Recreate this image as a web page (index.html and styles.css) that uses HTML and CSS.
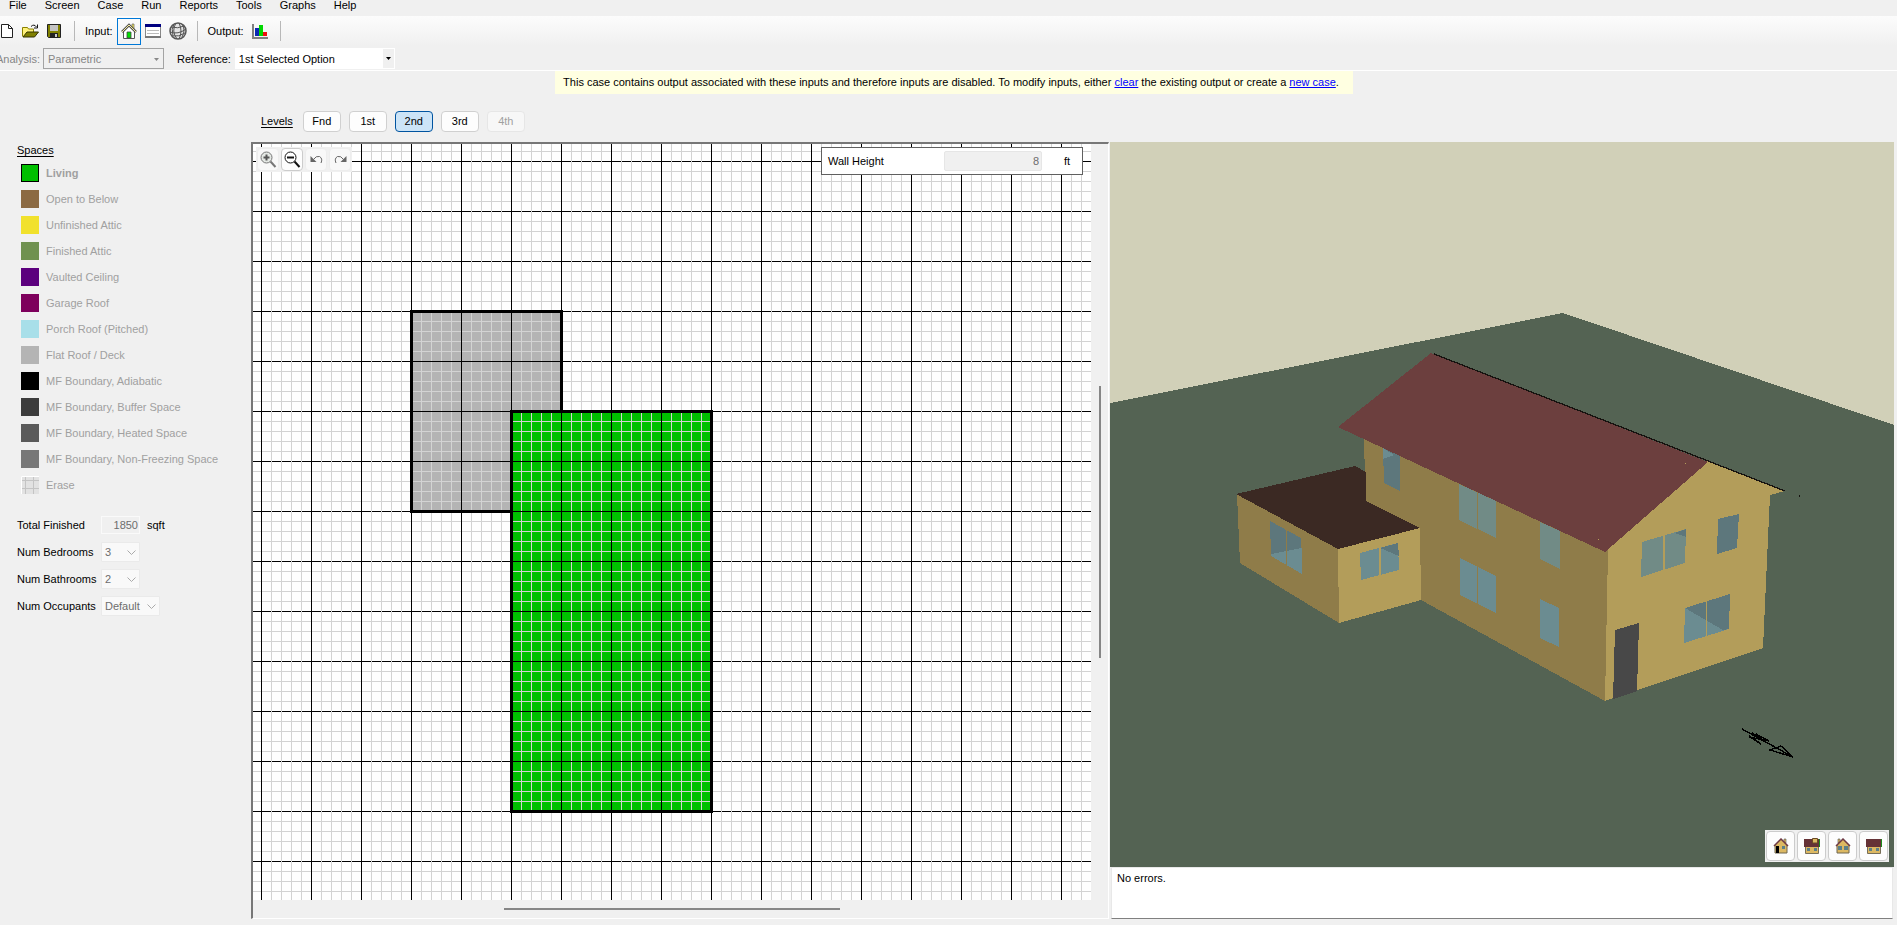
FILE: index.html
```html
<!DOCTYPE html>
<html lang="en">
<head>
<meta charset="utf-8">
<title>Building geometry</title>
<link rel="stylesheet" href="styles.css">
</head>
<body>
<div class="app">
  <nav class="menu">
    <button>File</button><button>Screen</button><button>Case</button><button>Run</button><button>Reports</button><button>Tools</button><button>Graphs</button><button>Help</button>
  </nav>

  <div class="toolbar">
    <button class="tool" aria-label="New"><svg width="12" height="14" viewBox="0 0 12 14"><path d="M.5.5h7l4 4v9H.5z" fill="#fff" stroke="#222"/><path d="M7.500.5v4h4" fill="none" stroke="#222"/></svg></button>
    <button class="tool tool-open" aria-label="Open"><svg width="17" height="14" viewBox="0 0 17 14"><path d="M.5 12.500v-9h5l1 1.500h5v3" fill="#fff27a" stroke="#8a8000"/><path d="M1 13l4-5h11.500l-4 5z" fill="#808000" stroke="#333300"/><path d="M9 2.500q3-3 5.500.5M15.500.5v3.500h-3.500" fill="none" stroke="#111"/></svg></button>
    <button class="tool tool-save" aria-label="Save"><svg width="14" height="14" viewBox="0 0 14 14"><path d="M.5.5h13v13h-12l-1-1z" fill="#808000" stroke="#222"/><path d="M3 1h8v6H3z" fill="#c4c4c4"/><path d="M3 9h8v5H3z" fill="#222"/><path d="M8 10h2v3H8z" fill="#ccc"/></svg></button>
    <span class="sep"></span>
    <span class="tool-label">Input:</span>
    <button class="tool tool-active" aria-label="Geometry"><svg width="16" height="16" viewBox="0 0 16 16"><path d="M2.500 8v7.500h11V8L8 2.500z" fill="#fff" stroke="#555"/><path d="M11 1h2v5h-2z" fill="#f5e85a" stroke="#666" stroke-width=".7"/><path d="M1 9l7-7 7 7" fill="none" stroke="#555" stroke-width="2.600"/><path d="M1 9l7-7 7 7" fill="none" stroke="#f5ec9a"/><path d="M6 9h4v6H6z" fill="#00e000" stroke="#444" stroke-width=".8"/></svg></button>
    <button class="tool tool-table" aria-label="Options"><svg width="16" height="14" viewBox="0 0 16 14"><path d="M.5.5h15v12.500H.5z" fill="#fff" stroke="#888"/><path d="M0 0h16v3H0z" fill="#000080"/><path d="M2 6.500h12M2 9.500h12" stroke="#bbb"/><path d="M0 13h16" stroke="#777" stroke-width="2"/></svg></button>
    <button class="tool tool-globe" aria-label="Site"><svg width="18" height="18" viewBox="0 0 18 18"><circle cx="9" cy="9" r="8" fill="#e4e4e4" stroke="#555" stroke-width="1.500"/><g fill="none" stroke="#555"><path d="M1 10q8 3 16-3M2 5q7 2 13-1M3 14q7 1 13-3M7 1q-5 8 1 16M10 1q4 8 0 16M5 2q-3 5-1 12M13 2q4 6 0 13"/></g></svg></button>
    <span class="sep sep-globe"></span>
    <span class="tool-label">Output:</span>
    <button class="tool tool-chart" aria-label="Chart"><svg width="16" height="16" viewBox="0 0 16 16"><path d="M1 1v14h15" fill="none" stroke="#808080" stroke-width="2"/><path d="M3 5h4v8H3z" fill="#0a28b4"/><path d="M7 2h4v11H7z" fill="#00d800"/><path d="M11 9h4v4h-4z" fill="#f01010"/></svg></button>
    <span class="sep sep-last"></span>
  </div>

  <div class="caserow">
    <label class="muted" for="analysis">Analysis:</label>
    <span class="combo combo-off"><select id="analysis" disabled><option>Parametric</option></select><svg class="tri" width="5" height="3"><path d="M0 0h5L2.500 3z" fill="#888"/></svg></span>
    <label class="ref-label" for="reference">Reference:</label>
    <span class="combo combo-on"><select id="reference"><option>1st Selected Option</option></select><svg class="tri" width="5" height="3"><path d="M0 0h5L2.500 3z"/></svg></span>
  </div>

  <div class="notice-row"><p class="notice">This case contains output associated with these inputs and therefore inputs are disabled. To modify inputs, either <a href="#clear">clear</a> the existing output or create a <a href="#new">new case</a>.</p></div>

  <main class="work">
    <div class="levels">
      <span class="underlined">Levels</span>
      <button>Fnd</button><button>1st</button><button class="current">2nd</button><button>3rd</button><button disabled>4th</button>
    </div>

    <aside class="side">
      <h2 class="underlined">Spaces</h2>
      <ul class="spaces">
        <li class="chosen"><i class="sw living"></i>Living</li>
        <li><i class="sw open"></i>Open to Below</li>
        <li><i class="sw unfinished"></i>Unfinished Attic</li>
        <li><i class="sw finished"></i>Finished Attic</li>
        <li><i class="sw vaulted"></i>Vaulted Ceiling</li>
        <li><i class="sw garage"></i>Garage Roof</li>
        <li><i class="sw porch"></i>Porch Roof (Pitched)</li>
        <li><i class="sw flat"></i>Flat Roof / Deck</li>
        <li><i class="sw adiabatic"></i>MF Boundary, Adiabatic</li>
        <li><i class="sw buffer"></i>MF Boundary, Buffer Space</li>
        <li><i class="sw heated"></i>MF Boundary, Heated Space</li>
        <li><i class="sw nonfreezing"></i>MF Boundary, Non-Freezing Space</li>
        <li><svg class="sw" width="18" height="18"><path d="M0 0h18v18H0z" fill="#e2e2e2"/><path d="M4.500 0v18M12.500 0v18M0 4.500h18M0 12.500h18" stroke="#c4c4c4"/><path d="M.5 18V.5H18" stroke="#fff" fill="none"/></svg>Erase</li>
      </ul>
      <div class="fields">
        <label for="area">Total Finished</label><span class="pair"><input id="area" value="1850" disabled>sqft</span>
        <label for="beds">Num Bedrooms</label><span class="drop"><select id="beds" disabled><option>3</option></select><svg width="9" height="6"><path d="M.5.5l4 4 4-4" fill="none" stroke="#aaa"/></svg></span>
        <label for="baths">Num Bathrooms</label><span class="drop"><select id="baths" disabled><option>2</option></select><svg width="9" height="6"><path d="M.5.5l4 4 4-4" fill="none" stroke="#aaa"/></svg></span>
        <label for="occ">Num Occupants</label><span class="drop drop-wide"><select id="occ" disabled><option>Default</option></select><svg width="9" height="6"><path d="M.5.5l4 4 4-4" fill="none" stroke="#aaa"/></svg></span>
      </div>
    </aside>

    <section class="plan">
      <div class="plan-view">
        <svg class="grid" width="100%" height="100%" shape-rendering="crispEdges">
          <defs>
            <pattern id="paper" x="8" y="17" width="50" height="50" patternUnits="userSpaceOnUse">
              <path d="M0 10.500h50M0 20.500h50M0 30.500h50M0 40.500h50" stroke="#d3d3d3"/>
              <path d="M0 .5h50" stroke="#000"/>
              <path d="M10.500 0v50M20.500 0v50M30.500 0v50M40.500 0v50" stroke="#d3d3d3"/>
              <path d="M.5 0v50" stroke="#000"/>
            </pattern>
            <pattern id="inside" x="8" y="17" width="50" height="50" patternUnits="userSpaceOnUse">
              <path d="M0 10.500h50M0 20.500h50M0 30.500h50M0 40.500h50M10.500 0v50M20.500 0v50M30.500 0v50M40.500 0v50" stroke="#d3d3d3"/>
              <path d="M0 .5h50M.5 0v50" stroke="#000"/>
            </pattern>
          </defs>
          <rect width="100%" height="100%" fill="url(#paper)"/>
          <path d="M158.500 167.500h150v200h-150z" fill="#b4b4b4"/>
          <path d="M158.500 167.500h150v200h-150z" fill="url(#inside)" stroke="#000" stroke-width="3"/>
          <path d="M258.500 267.500h200v400h-200z" fill="#00c000"/>
          <path d="M258.500 267.500h200v400h-200z" fill="url(#inside)" stroke="#000" stroke-width="3"/>
        </svg>
        <div class="plan-tools">
          <button disabled aria-label="Zoom in"><svg width="17" height="17" viewBox="0 0 17 17" fill="none" stroke="#777"><circle cx="6.500" cy="6.500" r="5.500" fill="#e4e8e4"/><path d="M3.500 6.500h6M6.500 3.500v6" stroke="#555" stroke-width="2"/><path d="M10.500 10.500l5 5.500" stroke-width="2"/></svg></button>
          <button aria-label="Zoom out"><svg width="17" height="17" viewBox="0 0 17 17" fill="none" stroke="#111"><circle cx="6.500" cy="6.500" r="5.500" fill="#fff"/><path d="M3 6.500h7" stroke-width="2"/><path d="M10.500 10.500l5 5.500" stroke-width="2"/></svg></button>
          <button disabled aria-label="Undo"><svg width="13" height="9" viewBox="0 0 13 9"><path d="M.5 1v6h6z" fill="#666"/><path d="M3.500 4.500Q6 .5 9.500 1.500q3.500 2 1.500 6.500" fill="none" stroke="#666"/></svg></button>
          <button disabled aria-label="Redo"><svg width="13" height="9" viewBox="0 0 13 9"><path d="M12.500 1v6h-6z" fill="#666"/><path d="M9.500 4.500Q7 .5 3.500 1.500 0 3.500 2 8" fill="none" stroke="#666"/></svg></button>
        </div>
        <div class="wall"><label for="wall">Wall Height</label><input id="wall" value="8" disabled><span>ft</span></div>
      </div>
      <div class="vbar"><i></i></div>
      <div class="hbar"><i></i></div>
    </section>

    <section class="model">
      <div class="scene">
        <svg class="house" viewBox="1110 142 784 725" preserveAspectRatio="xMidYMid slice" shape-rendering="crispEdges">
          <path d="M1000 142h1000v725H1000z" fill="#d1d0b8"/>
          <path d="M1000 425L1110 403 1563 313 1894 425 2000 461V867H1000z" fill="#546353"/>
          <path d="M1364 438L1608 552 1605 701 1421 600 1366 520z" fill="#8f7c49"/>
          <path d="M1237 494L1338 549 1339 623 1240 563z" fill="#8f7c49"/>
          <path d="M1338 549L1420 528 1421 600 1339 623z" fill="#b39d5a"/>
          <path d="M1236 494L1355 466 1366 472V501L1420 528 1338 549z" fill="#3b2923"/>
          <path d="M1605 552L1708 461 1785 491 1770 495 1763 648 1605 701z" fill="#b39d5a"/>
          <path d="M1605 552L1608 550 1605 701z" fill="#8f7c49"/>
          <path d="M1270 521l31 17 1 36-31-18z" fill="#5d777c"/>
          <path d="M1271 554l31-6v26l-31-18z" fill="#6b8c91"/>
          <path d="M1286.500 529v37" stroke="#8f7c49"/>
          <path d="M1360 553l38-10 1 27-38 10z" fill="#6b8c91"/>
          <path d="M1380 548l18-5 1 13z" fill="#5d777c"/>
          <path d="M1379.500 546v30" stroke="#b39d5a" stroke-width="2"/>
          <path d="M1383 448l17 8v35l-16-8z" fill="#5d777c"/>
          <path d="M1383 448l11 7-11 4z" fill="#6b8c91"/>
          <path d="M1459 484l37 17v37l-37-18z" fill="#718b86"/>
          <path d="M1460 558l36 18v37l-36-18zM1540 599l19 9v39l-19-9z" fill="#6b8c91"/>
          <path d="M1477.500 490v115" stroke="#8f7c49"/>
          <path d="M1540 522l20 9v38l-20-10z" fill="#718b86"/>
          <path d="M1642 542l44-13-1 34-44 14z" fill="#718b86"/>
          <path d="M1674 533l12-4v8z" fill="#5d777c"/>
          <path d="M1663.500 535v36" stroke="#b39d5a" stroke-width="2"/>
          <path d="M1718 519l21-5-2 34-20 6z" fill="#5d777c"/>
          <path d="M1685 608l45-14-1 35-45 14z" fill="#6b8c91"/>
          <path d="M1685 608l45-14-1 35-6 1z" fill="#5d777c"/>
          <path d="M1706.500 600v37" stroke="#b39d5a"/>
          <path d="M1615 630l24-7-2 68-24 8z" fill="#484848"/>
          <path d="M1431 353L1708 462 1605 552 1338 427z" fill="#6c3f3e"/>
          <path d="M1434 354L1785 491M1799 496h1" stroke="#171310" stroke-width="1.300" fill="none"/>
          <path d="M1685 463h1M1598 539h1" stroke="#b39d5a"/>
          <path d="M1742 729l51 28-12-11-11 4 23 7M1749 737l20 4-13-7M1749 736l12 8M1752 733l13 8" fill="none" stroke="#000" stroke-width="1.400"/>
        </svg>
        <div class="views">
          <button aria-label="Front"><svg width="16" height="16" viewBox="0 0 16 16"><path d="M11 1h2v4h-2z" fill="#dcb862" stroke="#555" stroke-width=".6"/><path d="M2 7l6-6 6 6v8H2z" fill="#dcb862" stroke="#6e6650"/><path d="M1 8l7-7 7 7" fill="none" stroke="#6e3a44" stroke-width="1.500"/><path d="M3 8h3v7H3z"/><path d="M9 8h3v3H9z" fill="#5b7f88"/></svg></button>
          <button aria-label="Right"><svg width="16" height="16" viewBox="0 0 16 16"><path d="M1.500 7.500h13v8h-13z" fill="#dcb862" stroke="#776f58"/><path d="M0 1h16v8H0z" fill="#653236"/><path d="M15.500 1v8" stroke="#1c8c1c"/><path d="M8.500.5h5v4.500h-5z" fill="#dcb862" stroke="#6b4b25"/><path d="M3 10h3v3H3zM10 10h3v3h-3z" fill="#5b7f88"/></svg></button>
          <button aria-label="Back"><svg width="16" height="16" viewBox="0 0 16 16"><path d="M3 1h2v4H3z" fill="#dcb862" stroke="#555" stroke-width=".6"/><path d="M2 7l6-6 6 6v8H2z" fill="#dcb862" stroke="#6e6650"/><path d="M1 8l7-7 7 7" fill="none" stroke="#6e3a44" stroke-width="1.500"/><path d="M3 8h4v4H3zM9 8h4v4H9z" fill="#5b7f88"/></svg></button>
          <button aria-label="Left"><svg width="16" height="16" viewBox="0 0 16 16"><path d="M1.500 7.500h13v8h-13z" fill="#dcb862" stroke="#776f58"/><path d="M0 1h16v8H0z" fill="#653236"/><path d="M15.500 1v8" stroke="#1c8c1c"/><path d="M3 10h3v3H3zM10 10h3v3h-3z" fill="#5b7f88"/></svg></button>
        </div>
      </div>
      <output class="errors">No errors.</output>
    </section>
  </main>
</div>
</body>
</html>
```
FILE: styles.css
```css
* { box-sizing: border-box; }
body { margin: 0; background: #f0f0f0; color: #000; font: 11px/16px "Liberation Sans", Arial, sans-serif; overflow: hidden; }
button, input, select { font: inherit; color: inherit; margin: 0; }
svg { display: block; flex: none; }
.app { height: 100vh; min-height: 700px; display: flex; flex-direction: column; padding-bottom: 6px; }
.underlined { text-decoration: underline; text-underline-offset: 2px; }

.menu { display: flex; align-items: flex-start; height: 16px; }
.menu button { border: 0; background: none; padding: 0 9px; line-height: 11px; }

.toolbar { display: flex; align-items: center; height: 30px; padding-left: 1px; background: linear-gradient(#fcfcfc, #f0f0f0); }
.tool { border: 0; background: none; padding: 0; display: flex; align-items: center; justify-content: center; }
.tool-open { margin-left: 9px; }
.tool-save { margin-left: 8px; }
.tool-active { width: 24px; height: 27px; border: 1px solid #0078d7; margin: 0 4px; }
.tool-globe { margin-left: 8px; }
.tool-label { margin-left: 10px; }
.tool-chart { margin-left: 8px; }
.sep { width: 1px; height: 20px; background: #b8b8b8; margin-left: 13px; }
.sep-globe { margin-left: 10px; }
.sep-last { margin-left: 12px; }

.caserow { display: flex; align-items: center; height: 25px; padding: 2px 0 1px; margin-left: -4px; border-bottom: 1px solid #fff; }
.muted { color: #868686; }
.combo { position: relative; display: flex; height: 21px; }
.combo select { appearance: none; border: 0; background: none; padding: 0 4px; width: 100%; opacity: 1; border-radius: 0; }
.combo-off { width: 121px; margin-left: 3px; border: 1px solid #a3a3a3; color: #868686; }
.combo-on { width: 160px; margin-left: 4px; background: #fff; }
.combo-on::after { content: ""; position: absolute; right: 1px; top: 1px; bottom: 1px; width: 11px; background: #f0f0f0; }
.tri { position: absolute; right: 4px; top: 9px; z-index: 1; }
.ref-label { margin-left: 13px; }

.notice-row { display: flex; justify-content: center; padding-left: 11px; }
.notice { margin: 0; padding: 3px 14px 4px 8px; background: #ffffe1; }
.notice a { color: #00f; }

.work { flex: 1; min-height: 0; display: grid; grid-template: 48px minmax(0, 1fr) / 251px minmax(0, 859fr) minmax(0, 784fr); padding-right: 3px; }
.levels { grid-column: 2 / 4; display: flex; align-items: center; gap: 8px; padding: 6px 0 0 10px; }
.levels span { margin-right: 2px; }
.levels button { width: 38px; height: 21px; padding: 0; border: 1px solid #d0d0d0; border-radius: 4px; background: #fdfdfd; }
.levels .current { background: #cce4f7; border-color: #0054a0; }
.levels button:disabled { color: #a0a0a0; background: #f7f7f7; border-color: #e6e6e6; }

.side { padding-left: 17px; }
.side h2 { margin: 0; font-size: 11px; font-weight: 400; line-height: 16px; }
.spaces { list-style: none; margin: 2px 0 0; padding: 0; color: #a0a0a0; }
.spaces li { display: flex; align-items: center; height: 26px; gap: 7px; padding-left: 4px; }
.chosen { font-weight: 700; }
.sw { width: 18px; height: 18px; flex: none; }
.living { background: #00c000; border: 1px solid #000; }
.open { background: #8c6a42; }
.unfinished { background: #f1e12c; }
.finished { background: #6f9150; }
.vaulted { background: #5c007e; }
.garage { background: #7e005c; }
.porch { background: #a8dfe9; }
.flat { background: #b4b4b4; }
.adiabatic { background: #000; }
.buffer { background: #3c3c3c; }
.heated { background: #5a5a5a; }
.nonfreezing { background: #787878; }
.fields { display: grid; grid-template-columns: 84px 1fr; grid-auto-rows: 27px; align-items: center; margin-top: 13px; }
.fields > * { white-space: nowrap; }
.pair { display: flex; align-items: center; gap: 7px; }
.pair input { width: 39px; height: 18px; padding: 0 1px; text-align: right; background: #f0f0f0; border: 1px solid #fafafa; color: #6d6d6d; }
.drop { position: relative; width: 39px; height: 20px; display: flex; }
.drop-wide { width: 59px; }
.drop select { appearance: none; width: 100%; border: 1px solid #eaeaea; background: #f9f9f9; padding: 0 3px; color: #6d6d6d; opacity: 1; border-radius: 1px; }
.drop svg { position: absolute; right: 4px; top: 8px; }

.plan { display: grid; grid-template: minmax(0, 1fr) 18px / minmax(0, 1fr) 17px; border: 1px solid #fff; border-top: 2px solid #777; border-left: 2px solid #777; margin-right: 1px; }
.plan-view { position: relative; background: #fff; overflow: hidden; }
.plan-tools { position: absolute; left: 3px; top: 3px; display: flex; gap: 2px; padding: 1px; background: #f0f0f0; }
.plan-tools button { width: 22px; height: 23px; padding: 0; display: flex; align-items: center; justify-content: center; border: 1px solid #ccc; border-radius: 4px; background: #fdfdfd; }
.plan-tools button:disabled { background: #f8f8f8; border-color: #ededed; }
.wall { position: absolute; right: 8px; top: 3px; width: 262px; height: 28px; display: flex; align-items: center; background: #fff; border: 1px solid #606060; padding-left: 6px; }
.wall label { width: 116px; }
.wall input { width: 98px; height: 20px; padding: 0 2px; text-align: right; color: #6d6d6d; background: #f0f0f0; border: 1px solid #e6e6e6; border-radius: 2px; margin-right: 22px; }
.vbar, .hbar { position: relative; }
.vbar i, .hbar i { position: absolute; background: #868686; }
.vbar i { left: 8px; width: 2px; top: 32%; height: 36%; }
.hbar i { top: 8px; height: 2px; left: 30%; width: 40%; }

.model { display: flex; flex-direction: column; min-height: 0; }
.scene { position: relative; flex: 1; min-height: 0; background: #546353; }
.house { position: absolute; width: 100%; height: 100%; }
.views { position: absolute; right: 5px; bottom: 5px; display: flex; gap: 2px; padding: 1px; background: #f0f0f0; }
.views button { width: 29px; height: 30px; padding: 0; display: flex; align-items: center; justify-content: center; border: 1px solid #ccc; border-radius: 4px; background: #fdfdfd; }
.errors { height: 52px; padding: 2px 5px; background: #fff; border: 1px solid #e8e8e8; border-bottom-color: #808080; margin: 0 1px; }
```
